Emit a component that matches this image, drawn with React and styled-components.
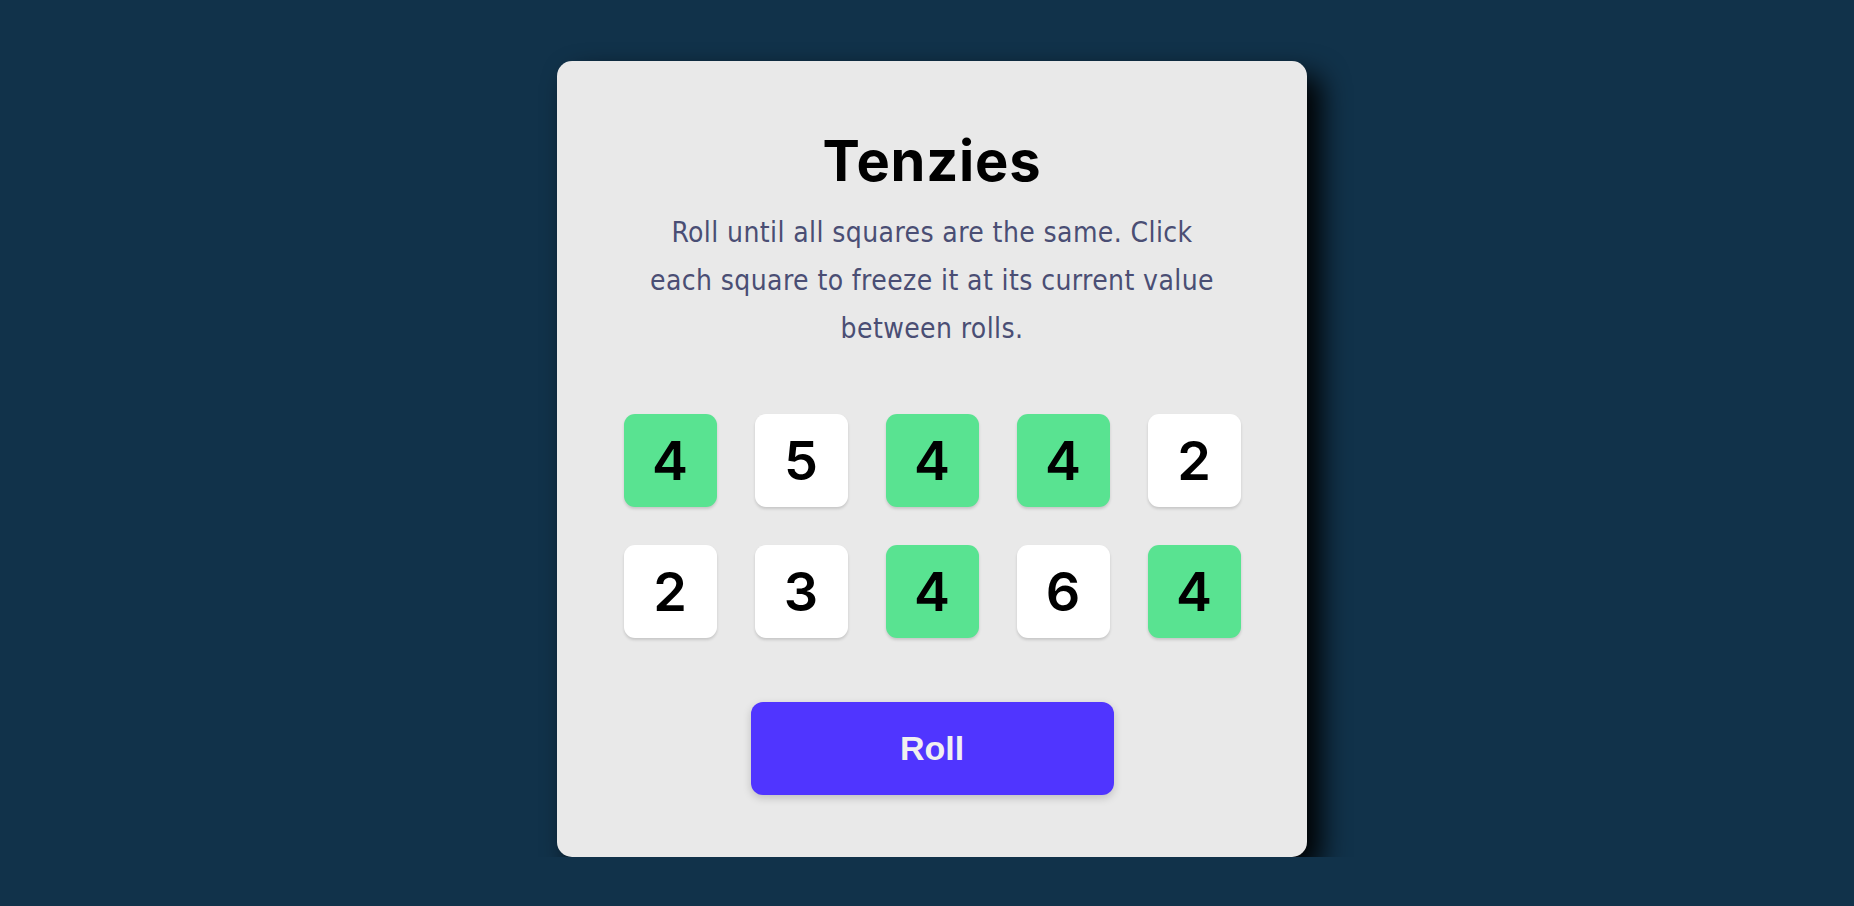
import React, { useState } from 'react';
import styled, { createGlobalStyle } from 'styled-components';

const GlobalStyle = createGlobalStyle`
  html, body {
    margin: 0;
    padding: 0;
    background: #11324a;
  }
  * {
    box-sizing: border-box;
  }
`;

const Page = styled.div`
  display: flex;
  justify-content: center;
  height: 857px;
  padding: 61px 0 0 10px;
  overflow: hidden;
`;

const Card = styled.main`
  width: 750px;
  display: flex;
  flex-direction: column;
  align-items: center;
  padding: 72px 0 62px;
  background: #e9e9e9;
  border-radius: 15px;
  box-shadow: 14px 14px 28px #000;
`;

const Title = styled.h1`
  margin: 0;
  font-family: Inter, 'Liberation Sans', sans-serif;
  font-size: 56px;
  font-weight: 700;
  line-height: 56px;
  letter-spacing: 0.8px;
  color: #000;
`;

const Description = styled.p`
  margin: 20px 0 0;
  max-width: 582px;
  font-family: 'DejaVu Sans Condensed', 'DejaVu Sans', sans-serif;
  font-size: 28px;
  line-height: 48px;
  letter-spacing: 0.4px;
  text-align: center;
  color: #4a4e74;
`;

const DiceGrid = styled.div`
  display: grid;
  grid-template-columns: repeat(5, 93px);
  grid-auto-rows: 93px;
  gap: 38px;
  margin-top: 61px;
`;

const Die = styled.button`
  display: flex;
  align-items: center;
  justify-content: center;
  padding: 0;
  border: none;
  border-radius: 11px;
  background: ${(p) => (p.$held ? '#59e391' : '#ffffff')};
  box-shadow: 0 2px 3px rgba(0, 0, 0, 0.15);
  font-family: Inter, 'Liberation Sans', sans-serif;
  font-size: 54px;
  font-weight: 600;
  color: #000;
  cursor: pointer;
`;

const RollButton = styled.button`
  width: 363px;
  height: 93px;
  margin-top: 64px;
  border: none;
  border-radius: 12px;
  background: #5035ff;
  box-shadow: 0 3px 8px rgba(0, 0, 0, 0.18);
  font-family: 'Liberation Sans', Arial, sans-serif;
  font-size: 34px;
  font-weight: 700;
  color: #f0f0f0;
  cursor: pointer;
`;

const START = [
  { value: 4, held: true },
  { value: 5, held: false },
  { value: 4, held: true },
  { value: 4, held: true },
  { value: 2, held: false },
  { value: 2, held: false },
  { value: 3, held: false },
  { value: 4, held: true },
  { value: 6, held: false },
  { value: 4, held: true },
];

const App = () => {
  const [dice, setDice] = useState(START.map((d, i) => ({ ...d, id: i })));

  const toggle = (id) =>
    setDice((old) => old.map((d) => (d.id === id ? { ...d, held: !d.held } : d)));

  const roll = () =>
    setDice((old) =>
      old.map((d) => (d.held ? d : { ...d, value: Math.ceil(Math.random() * 6) }))
    );

  return (
    <>
      <GlobalStyle />
      <Page>
        <Card>
          <Title>Tenzies</Title>
          <Description>
            Roll until all squares are the same. Click each square to freeze it at its
            current value between rolls.
          </Description>
          <DiceGrid>
            {dice.map((d) => (
              <Die key={d.id} $held={d.held} onClick={() => toggle(d.id)}>
                {d.value}
              </Die>
            ))}
          </DiceGrid>
          <RollButton onClick={roll}>Roll</RollButton>
        </Card>
      </Page>
    </>
  );
};

export default App;
